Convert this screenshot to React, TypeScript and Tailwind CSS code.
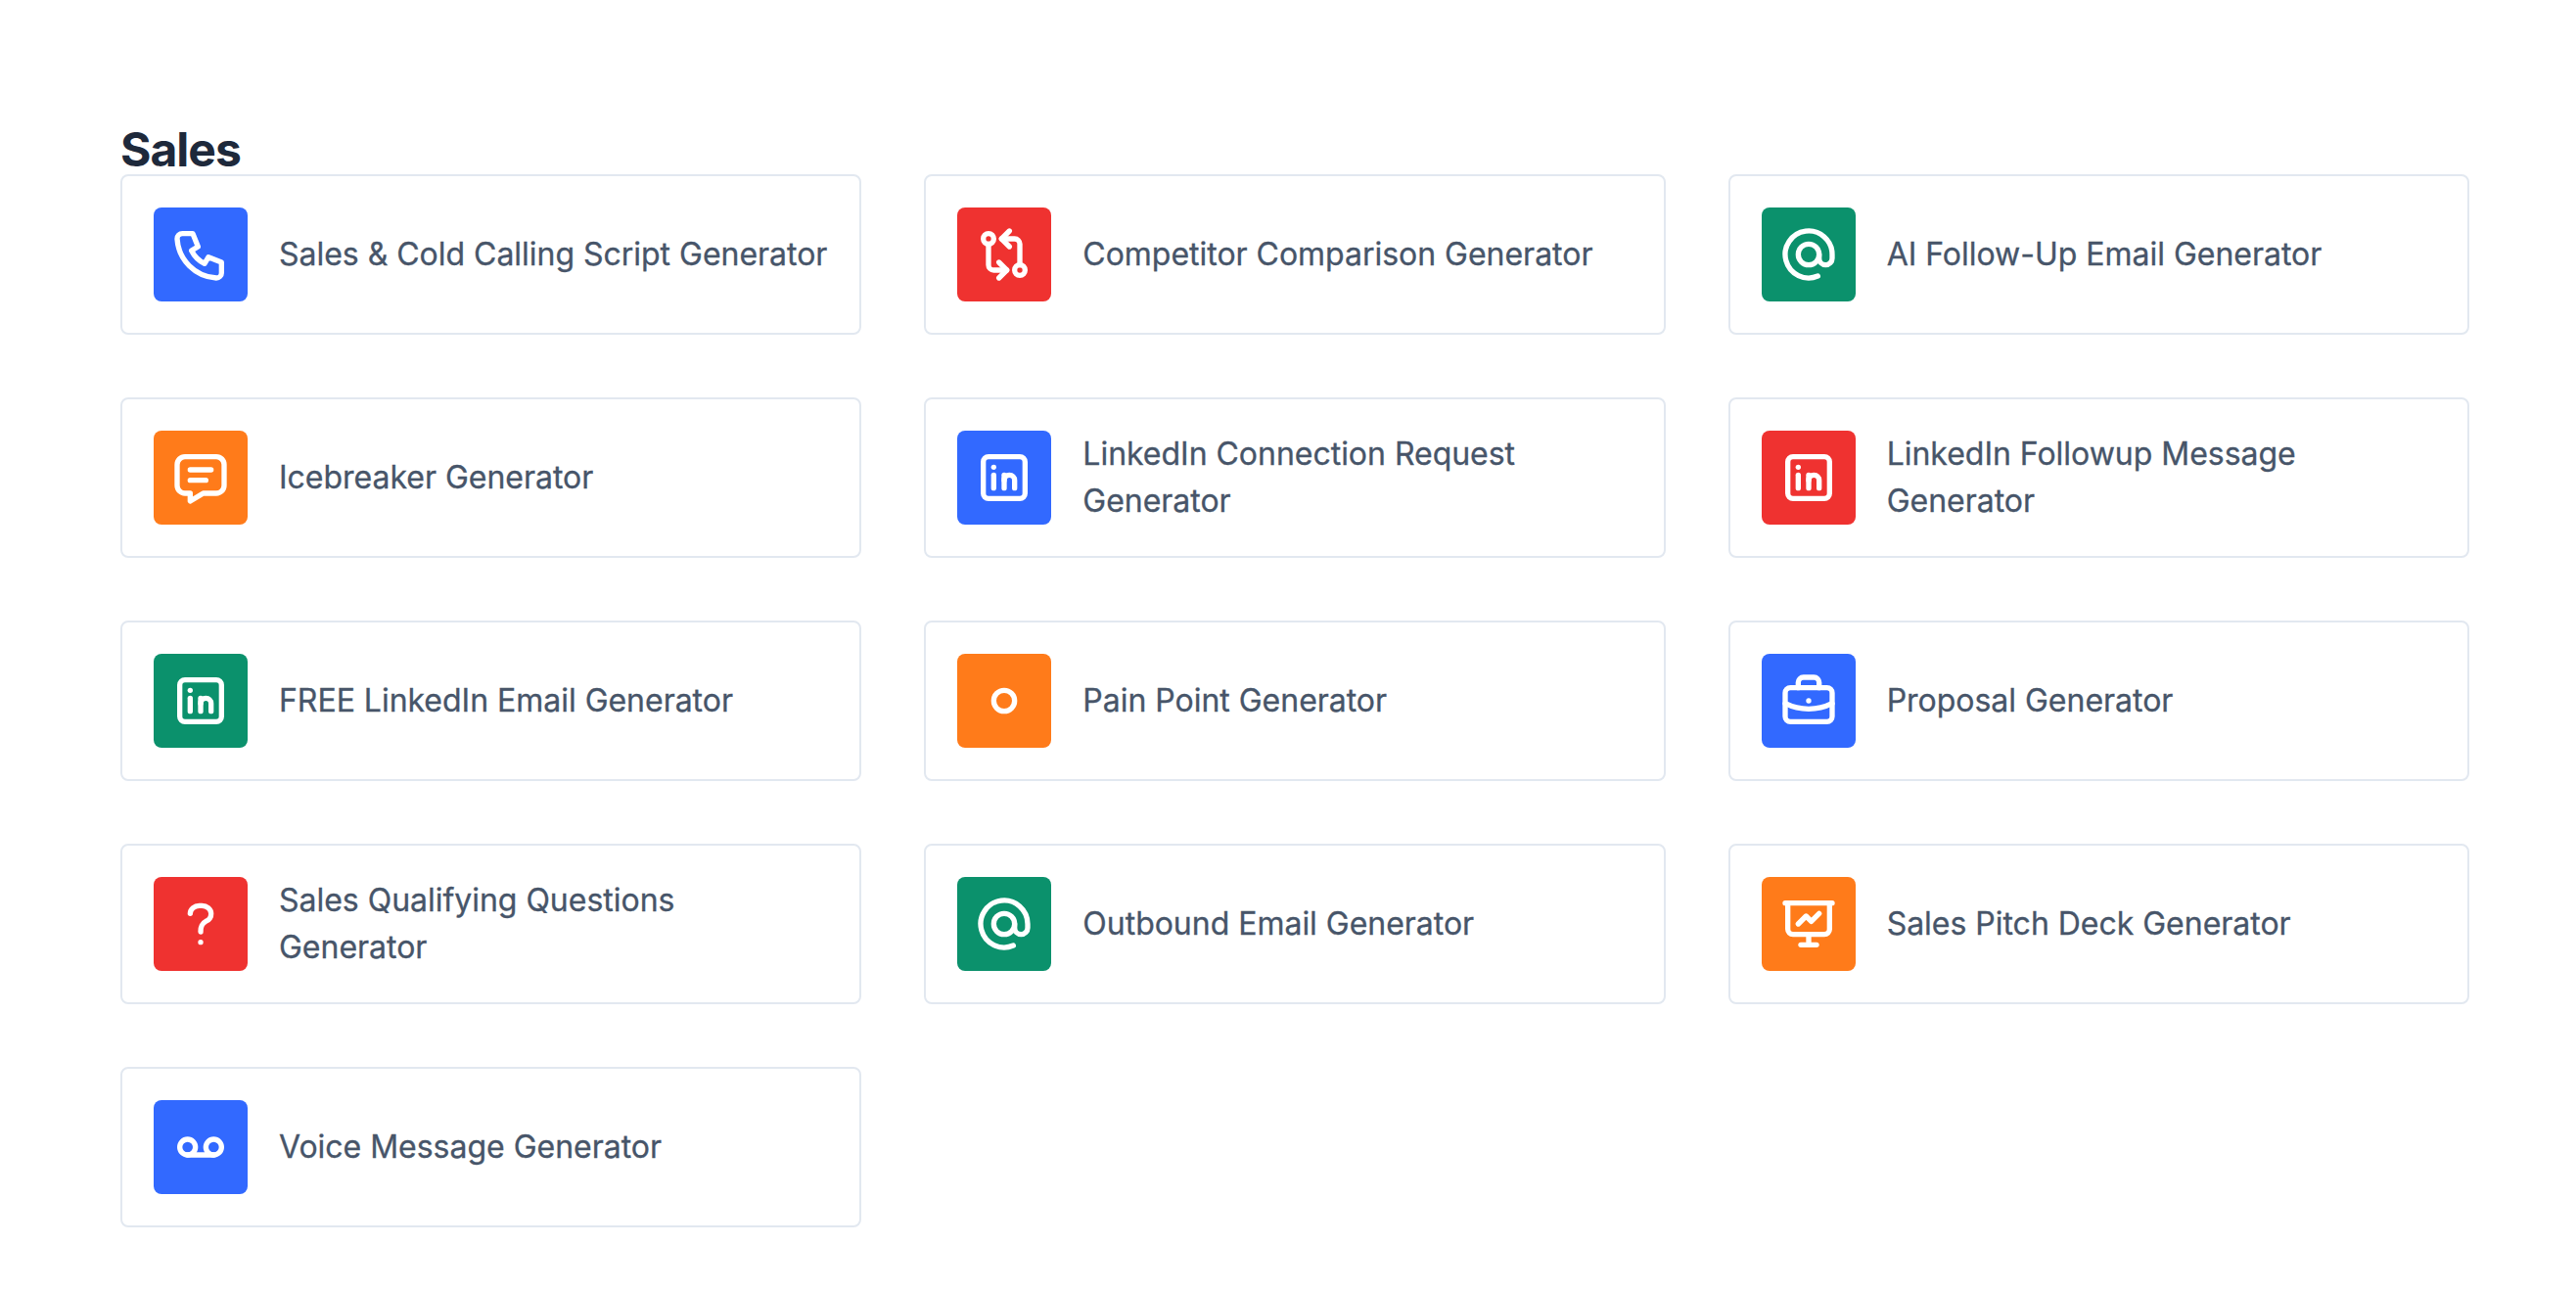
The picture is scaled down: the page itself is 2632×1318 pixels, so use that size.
import type { ReactNode } from "react";

type Tool = {
  name: string;
  color: string;
  icon: ReactNode;
};

const ICONS = {
  phone: (
    <path d="M5 4h4l2 5l-2.5 1.5a11 11 0 0 0 5 5l1.5 -2.5l5 2v4a2 2 0 0 1 -2 2a16 16 0 0 1 -15 -15a2 2 0 0 1 2 -2" />
  ),
  compare: (
    <>
      <circle cx="6" cy="6" r="2" />
      <circle cx="18" cy="18" r="2" />
      <path d="M11 6h5a2 2 0 0 1 2 2v8" />
      <path d="M14 9l-3 -3l3 -3" />
      <path d="M13 18h-5a2 2 0 0 1 -2 -2v-8" />
      <path d="M10 15l3 3l-3 3" />
    </>
  ),
  at: (
    <>
      <circle cx="12" cy="12" r="4" />
      <path d="M16 12v1.5a2.5 2.5 0 0 0 5 0v-1.5a9 9 0 1 0 -5.5 8.28" />
    </>
  ),
  message: (
    <>
      <path d="M8 9h8" />
      <path d="M8 13h6" />
      <path d="M18 4a3 3 0 0 1 3 3v8a3 3 0 0 1 -3 3h-5l-5 3v-3h-2a3 3 0 0 1 -3 -3v-8a3 3 0 0 1 3 -3h12z" />
    </>
  ),
  linkedin: (
    <>
      <rect x="4" y="4" width="16" height="16" rx="2" />
      <path d="M8 11v5" />
      <path d="M8 8v.01" />
      <path d="M12 16v-5" />
      <path d="M16 16v-3a2 2 0 0 0 -4 0" />
    </>
  ),
  point: <circle cx="12" cy="12" r="4" />,
  briefcase: (
    <>
      <rect x="3" y="7" width="18" height="13" rx="2" />
      <path d="M8 7v-2a2 2 0 0 1 2 -2h4a2 2 0 0 1 2 2v2" />
      <path d="M12 12v.01" />
      <path d="M3 13a20 20 0 0 0 18 0" />
    </>
  ),
  question: (
    <>
      <path d="M8 8a3.5 3 0 0 1 3.5 -3h1a3.5 3 0 0 1 3.5 3a3 3 0 0 1 -2 3a3 4 0 0 0 -2 4" />
      <path d="M12 19v.01" />
    </>
  ),
  presentation: (
    <>
      <path d="M3 4h18" />
      <path d="M4 4v10a2 2 0 0 0 2 2h12a2 2 0 0 0 2 -2v-10" />
      <path d="M12 16v4" />
      <path d="M9 20h6" />
      <path d="M8 12l3 -3l2 2l3 -3" />
    </>
  ),
  voicemail: (
    <>
      <circle cx="7" cy="12" r="3" />
      <circle cx="17" cy="12" r="3" />
      <path d="M7 15h10" />
    </>
  ),
};

const BLUE = "bg-[#3269ff]";
const RED = "bg-[#ef3230]";
const GREEN = "bg-[#0b916c]";
const ORANGE = "bg-[#ff7b1a]";

const TOOLS: Tool[] = [
  { name: "Sales & Cold Calling Script Generator", color: BLUE, icon: ICONS.phone },
  { name: "Competitor Comparison Generator", color: RED, icon: ICONS.compare },
  { name: "AI Follow-Up Email Generator", color: GREEN, icon: ICONS.at },
  { name: "Icebreaker Generator", color: ORANGE, icon: ICONS.message },
  { name: "LinkedIn Connection Request Generator", color: BLUE, icon: ICONS.linkedin },
  { name: "LinkedIn Followup Message Generator", color: RED, icon: ICONS.linkedin },
  { name: "FREE LinkedIn Email Generator", color: GREEN, icon: ICONS.linkedin },
  { name: "Pain Point Generator", color: ORANGE, icon: ICONS.point },
  { name: "Proposal Generator", color: BLUE, icon: ICONS.briefcase },
  { name: "Sales Qualifying Questions Generator", color: RED, icon: ICONS.question },
  { name: "Outbound Email Generator", color: GREEN, icon: ICONS.at },
  { name: "Sales Pitch Deck Generator", color: ORANGE, icon: ICONS.presentation },
  { name: "Voice Message Generator", color: BLUE, icon: ICONS.voicemail },
];

function ToolCard({ name, color, icon }: Tool) {
  return (
    <a className="flex h-[164px] items-center gap-8 rounded-lg border-2 border-[#e2e8f0] bg-white px-8">
      <span className={`flex size-24 shrink-0 items-center justify-center rounded-lg text-white ${color}`}>
        <svg
          viewBox="0 0 24 24"
          className="size-16"
          fill="none"
          stroke="currentColor"
          strokeWidth="2"
          strokeLinecap="round"
          strokeLinejoin="round"
          aria-hidden="true"
        >
          {icon}
        </svg>
      </span>
      <span className="text-[32px] leading-[48px] tracking-[-0.02px] text-[#475569] [-webkit-text-stroke:0.3px_#475569]">
        {name}
      </span>
    </a>
  );
}

export default function App() {
  return (
    <main className="min-h-[1318px] bg-white pt-[122px] pl-[123px] font-['Inter',sans-serif]">
      <section className="w-[2400px]">
        <h2 className="h-14 text-[48px] leading-[62px] font-bold tracking-[-1px] text-[#1e293b]">Sales</h2>
        <div className="grid grid-cols-3 gap-16">
          {TOOLS.map((tool) => (
            <ToolCard key={tool.name} {...tool} />
          ))}
        </div>
      </section>
    </main>
  );
}
